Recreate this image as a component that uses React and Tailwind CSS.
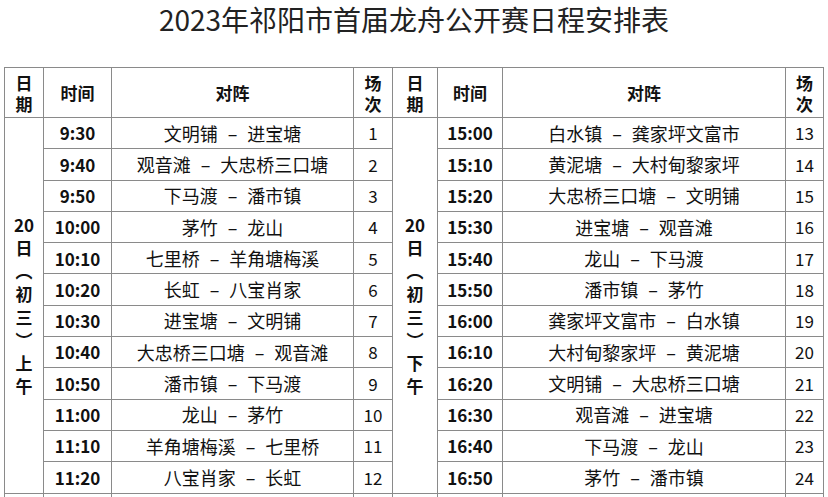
import React from 'react';

const left = [
  ['9:30', '文明铺', '进宝塘', 1],
  ['9:40', '观音滩', '大忠桥三口塘', 2],
  ['9:50', '下马渡', '潘市镇', 3],
  ['10:00', '茅竹', '龙山', 4],
  ['10:10', '七里桥', '羊角塘梅溪', 5],
  ['10:20', '长虹', '八宝肖家', 6],
  ['10:30', '进宝塘', '文明铺', 7],
  ['10:40', '大忠桥三口塘', '观音滩', 8],
  ['10:50', '潘市镇', '下马渡', 9],
  ['11:00', '龙山', '茅竹', 10],
  ['11:10', '羊角塘梅溪', '七里桥', 11],
  ['11:20', '八宝肖家', '长虹', 12],
];

const right = [
  ['15:00', '白水镇', '龚家坪文富市', 13],
  ['15:10', '黄泥塘', '大村甸黎家坪', 14],
  ['15:20', '大忠桥三口塘', '文明铺', 15],
  ['15:30', '进宝塘', '观音滩', 16],
  ['15:40', '龙山', '下马渡', 17],
  ['15:50', '潘市镇', '茅竹', 18],
  ['16:00', '龚家坪文富市', '白水镇', 19],
  ['16:10', '大村甸黎家坪', '黄泥塘', 20],
  ['16:20', '文明铺', '大忠桥三口塘', 21],
  ['16:30', '观音滩', '进宝塘', 22],
  ['16:40', '下马渡', '龙山', 23],
  ['16:50', '茅竹', '潘市镇', 24],
];

const cell = 'border-[1.5px] border-[#8a8a8a] text-center align-middle p-0';

const Stack = ({ a, b }) => (
  <div className="flex flex-col items-center leading-[21px]">
    <span>{a}</span>
    <span>{b}</span>
  </div>
);

const DateCell = ({ half }) => (
  <td rowSpan={12} className={cell + ' font-bold text-[17px]'}>
    <div className="flex flex-col items-center leading-[23px]">
      <span>20</span>
      <span>日</span>
      <span>︵</span>
      <span>初</span>
      <span>三</span>
      <span>︶</span>
      <span>{half}</span>
      <span>午</span>
    </div>
  </td>
);

const Match = ({ a, b }) => (
  <span className="text-[18px]">
    {a}
    <span className="mx-[10px]">–</span>
    {b}
  </span>
);

export default function App() {
  return (
    <div
      className="w-[828px] h-[497px] overflow-hidden bg-white text-[#111]"
      style={{ fontFamily: '"Noto Sans CJK SC", "Noto Sans", sans-serif' }}
    >
      <h1 className="text-center text-[28px] leading-[38px] font-normal text-[#222] h-[67px]">
        2023年祁阳市首届龙舟公开赛日程安排表
      </h1>
      <table className="ml-[4px] w-[819px] table-fixed border-collapse">
        <colgroup>
          <col className="w-[39px]" />
          <col className="w-[68px]" />
          <col className="w-[242px]" />
          <col className="w-[39px]" />
          <col className="w-[45px]" />
          <col className="w-[65px]" />
          <col className="w-[283px]" />
          <col className="w-[38px]" />
        </colgroup>
        <thead>
          <tr className="h-[50px] text-[17px] font-bold">
            <th className={cell}><Stack a="日" b="期" /></th>
            <th className={cell}>时间</th>
            <th className={cell}>对阵</th>
            <th className={cell}><Stack a="场" b="次" /></th>
            <th className={cell}><Stack a="日" b="期" /></th>
            <th className={cell}>时间</th>
            <th className={cell}>对阵</th>
            <th className={cell}><Stack a="场" b="次" /></th>
          </tr>
        </thead>
        <tbody className="text-[17px]">
          {left.map((l, i) => {
            const r = right[i];
            return (
              <tr key={i} className="h-[31.3px]">
                {i === 0 && <DateCell half="上" />}
                <td className={cell + ' font-bold'}>{l[0]}</td>
                <td className={cell}><Match a={l[1]} b={l[2]} /></td>
                <td className={cell}>{l[3]}</td>
                {i === 0 && <DateCell half="下" />}
                <td className={cell + ' font-bold'}>{r[0]}</td>
                <td className={cell}><Match a={r[1]} b={r[2]} /></td>
                <td className={cell}>{r[3]}</td>
              </tr>
            );
          })}
          <tr className="h-[31px]">
            {Array.from({ length: 8 }).map((_, k) => (
              <td key={k} className={cell}></td>
            ))}
          </tr>
        </tbody>
      </table>
    </div>
  );
}
